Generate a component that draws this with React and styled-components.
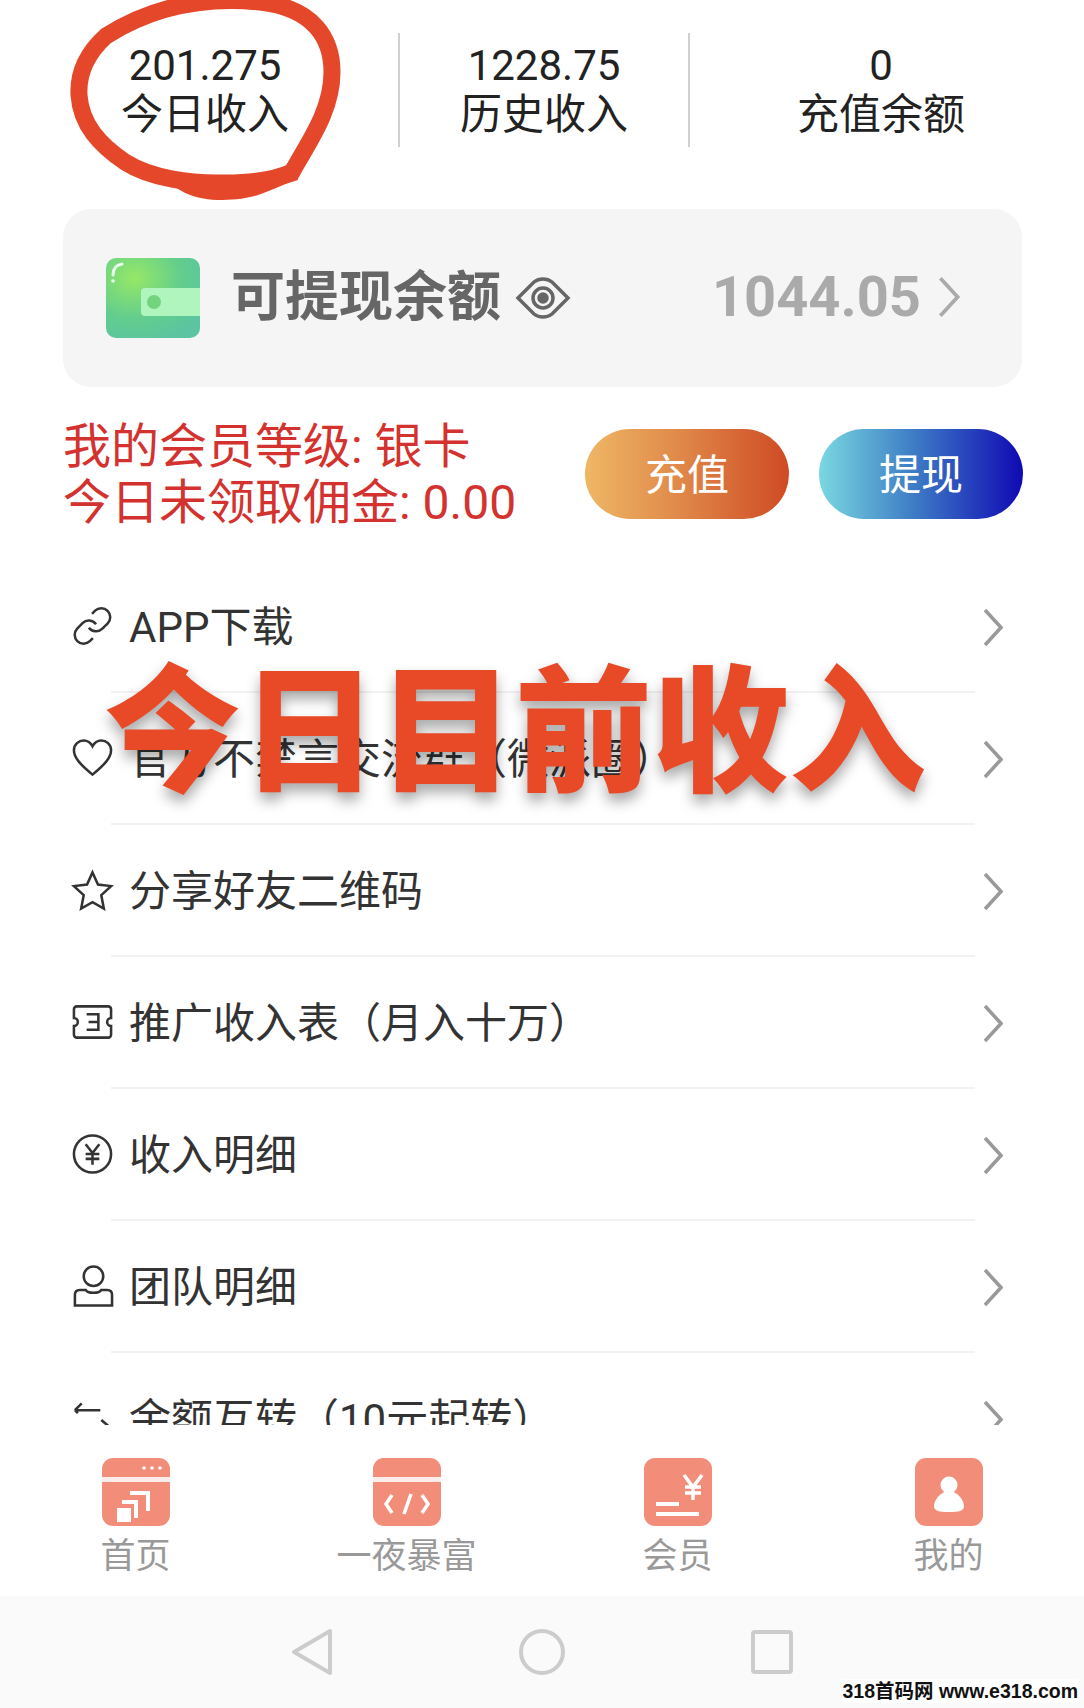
import React from "react";
import styled, { createGlobalStyle } from "styled-components";

const GlobalStyle = createGlobalStyle`
  html, body { margin: 0; padding: 0; background: #fff; }
  body { font-family: Roboto, "Noto Sans CJK SC", sans-serif; }
`;

const Page = styled.div`
  position: relative;
  width: 1084px;
  height: 1708px;
  overflow: hidden;
  background: #fff;
  display: flex;
  flex-direction: column;
`;

const Stats = styled.div`
  display: grid;
  grid-template-columns: 386px 290px 384px;
  padding: 33px 12px 0;
  height: 176px;
`;

const Stat = styled.div`
  height: 114px;
  padding-top: 8px;
  box-sizing: border-box;
  text-align: center;
  color: #222;
  font-size: 42px;
  line-height: 49px;
  border-left: ${(p) => (p.$first ? "none" : "2px solid #d0d0d0")};
`;

const BalanceCard = styled.div`
  margin: 0 62px 0 63px;
  height: 178px;
  border-radius: 28px;
  background: #f5f5f5;
  display: flex;
  align-items: center;
  padding: 0 61px 0 43px;
  box-sizing: border-box;
`;

const BalanceTitle = styled.div`
  margin-left: 31px;
  font-size: 54px;
  font-weight: 700;
  color: #666;
  line-height: 60px;
`;

const BalanceAmount = styled.div`
  margin-left: auto;
  font-size: 56px;
  font-weight: 700;
  color: #aaa;
  margin-top: -2px;
`;

const BalanceChevron = styled.span`
  display: flex;
  margin-left: 16px;
  margin-top: -3px;
`;

const EyeSvg = styled.svg`
  margin-left: 14px;
  fill: none;
  stroke: #666;
  stroke-width: 3.5;
`;

const MemberRow = styled.div`
  display: flex;
  align-items: center;
  justify-content: space-between;
  margin-top: 31px;
  padding: 0 61px 0 63px;
  height: 112px;
`;

const MemberText = styled.div`
  color: #d4322e;
  font-size: 48px;
  line-height: 56px;
  padding-top: 2px;
`;

const Buttons = styled.div`
  display: flex;
  gap: 30px;
`;

const PillButton = styled.div`
  width: 204px;
  height: 90px;
  border-radius: 45px;
  display: flex;
  align-items: center;
  justify-content: center;
  color: #fff;
  font-size: 42px;
  padding-bottom: 6px;
  box-sizing: border-box;
  background: ${(p) =>
    p.$blue
      ? "linear-gradient(90deg, #7ad8e0 0%, #3f7fc6 45%, #1009b4 100%)"
      : "linear-gradient(90deg, #efb765 0%, #e08a4a 45%, #cf4a24 100%)"};
`;

const MenuList = styled.div`
  margin-top: 31px;
  height: 864px;
  overflow: hidden;
`;

const MenuRow = styled.div`
  display: flex;
  align-items: center;
  height: 130px;
  padding: 0 81px 0 71px;
  color: #333;
  font-size: 42px;
`;

const RowLabel = styled.span`
  margin-left: 15px;
  margin-top: -6px;
  flex: 1;
`;

const RowChevron = styled.span`
  display: flex;
  margin-top: 2px;
`;

const RowDivider = styled.div`
  height: 2px;
  margin: 0 109px 0 111px;
  background: #f2f2f2;
`;

const TabBar = styled.div`
  display: grid;
  grid-template-columns: repeat(4, 1fr);
  height: 171px;
  padding-top: 33px;
  box-sizing: border-box;
`;

const Tab = styled.div`
  display: flex;
  flex-direction: column;
  align-items: center;
  color: #999;
  font-size: 35px;
  line-height: 40px;
  gap: 11px;
`;

const NavBar = styled.div`
  height: 112px;
  background: #fafafa;
  display: flex;
  justify-content: center;
  align-items: center;
  gap: 184px;
`;

const Circled = styled.svg`
  position: absolute;
  left: 0;
  top: 0;
`;

const BigCaption = styled.div`
  position: absolute;
  left: 104px;
  top: 626px;
  font-size: 137px;
  line-height: 190px;
  font-weight: 900;
  white-space: nowrap;
  color: #e84a27;
  font-family: "Noto Sans CJK SC", sans-serif;
  text-shadow: 0 8px 14px rgba(0, 0, 0, 0.35);
`;

const Watermark = styled.div`
  position: absolute;
  right: 6px;
  bottom: 5px;
  font-family: "Liberation Sans", "Noto Sans CJK SC", sans-serif;
  font-size: 19.5px;
  font-weight: 700;
  line-height: 24px;
  white-space: nowrap;
  background: rgba(255, 255, 255, 0.9);
  color: #111;
`;

const Chevron = ({ w = 20, h = 39, color = "#999", sw = 3.5 }) => (
  <svg width={w} height={h} viewBox="0 0 20 39">
    <path d="M2 2l16 17.5L2 37" fill="none" stroke={color} strokeWidth={sw} />
  </svg>
);

const Wallet = () => (
  <svg width="94" height="80" viewBox="0 0 94 80">
    <defs>
      <radialGradient id="wg" cx="0.3" cy="0.25" r="0.85">
        <stop offset="0" stopColor="#96e866" />
        <stop offset="0.6" stopColor="#62cd8d" />
        <stop offset="1" stopColor="#5cc4a2" />
      </radialGradient>
    </defs>
    <rect x="0" y="0" width="94" height="80" rx="10" fill="url(#wg)" />
    <path d="M39 30h55v28H39a4 4 0 0 1-4-4V34a4 4 0 0 1 4-4z" fill="#b0f5bd" />
    <circle cx="48" cy="44" r="7" fill="#72d47e" />
    <path d="M7 17c0-6 3-10 9-11" fill="none" stroke="#eafff0" strokeWidth="3" strokeLinecap="round" />
    <circle cx="7" cy="23" r="1.8" fill="#eafff0" />
  </svg>
);

const Eye = () => (
  <EyeSvg width="56" height="44" viewBox="0 0 56 44">
    <path d="M3 22L19 6c5-4 13-4 18 0l16 16-16 16c-5 4-13 4-18 0z" />
    <circle cx="28" cy="22" r="10" />
    <circle cx="28" cy="22" r="4" fill="#666" />
  </EyeSvg>
);

const rowIcons = {
  link: (
    <g transform="scale(1.83)" strokeWidth="1.4">
      <path d="M10 13a5 5 0 0 0 7.54.54l3-3a5 5 0 0 0-7.07-7.07l-1.72 1.71" />
      <path d="M14 11a5 5 0 0 0-7.54-.54l-3 3a5 5 0 0 0 7.07 7.07l1.71-1.71" />
    </g>
  ),
  heart: <path d="M22 39C10 29 3 22 3 14 3 8 8 4 13 4c4 0 7 2 9 6 2-4 5-6 9-6 5 0 10 4 10 10 0 8-7 15-19 25z" />,
  star: <path d="M22 4l5.6 12.4L41 18l-10 9.300 2.600 13.700L22 34.500 10.400 41 13 27.300 3 18l13.400-1.600z" />,
  ticket: (
    <>
      <path d="M6 6h32a3 3 0 0 1 3 3v9a4 4 0 0 0 0 8v9a3 3 0 0 1-3 3H6a3 3 0 0 1-3-3v-9a4 4 0 0 0 0-8V9a3 3 0 0 1 3-3z" />
      <path d="M16 14h12v16H16M18 22h10" />
    </>
  ),
  yen: (
    <>
      <circle cx="22" cy="22" r="19" />
      <path d="M15 12l7 9 7-9M22 21v12M15 22h14M15 27h14" />
    </>
  ),
  user: (
    <>
      <circle cx="23" cy="12" r="10" />
      <path d="M4 42V31c0-3 2-5 5-5h6c2 4 14 4 16 0h6c3 0 5 2 5 5v11z" />
    </>
  ),
  transfer: (
    <>
      <path d="M4 14h26M4 14l7-7M4 14l3 3" />
      <path d="M31 24l7 6" />
    </>
  ),
};

const RowIconSvg = styled.svg`
  flex: none;
  fill: none;
  stroke: #333;
  stroke-width: 2.6;
`;

const RowIcon = ({ name }) => (
  <RowIconSvg width="43" height="44" viewBox="0 0 44 44">
    {rowIcons[name]}
  </RowIconSvg>
);

const TabIcon = ({ name }) => (
  <svg width="68" height="68" viewBox="0 0 68 68">
    <rect width="68" height="68" rx="11" fill="#f28d7a" />
    {(name === "home" || name === "code") && <rect y="19" width="68" height="5" fill="#fff" fillOpacity=".85" />}
    {name === "home" && (
      <g fill="#fff">
        <circle cx="42" cy="10" r="1.800" />
        <circle cx="50" cy="10" r="1.800" />
        <circle cx="58" cy="10" r="1.800" />
        <rect x="15" y="50" width="14" height="14" />
        <path d="M20 42h16v18h-4V46H20z" />
        <path d="M28 33h20v20h-4V37H28z" />
      </g>
    )}
    {name === "code" && (
      <path d="M19 37l-6 9 6 9M49 37l6 9-6 9M38 36l-7 20" fill="none" stroke="#fff" strokeWidth="3.500" />
    )}
    {name === "vip" && (
      <g fill="none" stroke="#fff" strokeWidth="3.500">
        <path d="M40 17l9 12 9-12M49 29v13M41 29h16M41 35h16" />
        <path d="M12 46h23M12 56h43" strokeWidth="4" />
      </g>
    )}
    {name === "me" && (
      <g fill="#fff">
        <circle cx="34" cy="27" r="8.500" />
        <path d="M34 33c-9 0-15 10-15 15 0 5 5 6 15 6s15-1 15-6c0-5-6-15-15-15z" />
      </g>
    )}
  </svg>
);

const menu = [
  { icon: "link", label: "APP下载" },
  { icon: "heart", label: "官方不禁言交流群（微派圈）" },
  { icon: "star", label: "分享好友二维码" },
  { icon: "ticket", label: "推广收入表（月入十万）" },
  { icon: "yen", label: "收入明细" },
  { icon: "user", label: "团队明细" },
  { icon: "transfer", label: "余额互转（10元起转）" },
];

const tabs = [
  { icon: "home", label: "首页" },
  { icon: "code", label: "一夜暴富" },
  { icon: "vip", label: "会员" },
  { icon: "me", label: "我的" },
];

export default function App() {
  return (
    <Page>
      <GlobalStyle />
      <Stats>
        <Stat $first>201.275<br />今日收入</Stat>
        <Stat>1228.75<br />历史收入</Stat>
        <Stat>0<br />充值余额</Stat>
      </Stats>

      <BalanceCard>
        <Wallet />
        <BalanceTitle>可提现余额</BalanceTitle>
        <Eye />
        <BalanceAmount>1044.05</BalanceAmount>
        <BalanceChevron>
          <Chevron w={24} h={42} color="#aaa" />
        </BalanceChevron>
      </BalanceCard>

      <MemberRow>
        <MemberText>
          我的会员等级: 银卡<br />今日未领取佣金: 0.00
        </MemberText>
        <Buttons>
          <PillButton>充值</PillButton>
          <PillButton $blue>提现</PillButton>
        </Buttons>
      </MemberRow>

      <MenuList>
        {menu.map((item, i) => (
          <React.Fragment key={item.label}>
            <MenuRow>
              <RowIcon name={item.icon} />
              <RowLabel>{item.label}</RowLabel>
              <RowChevron>
                <Chevron />
              </RowChevron>
            </MenuRow>
            {i < menu.length - 1 && <RowDivider />}
          </React.Fragment>
        ))}
      </MenuList>

      <TabBar>
        {tabs.map((t) => (
          <Tab key={t.label}>
            <TabIcon name={t.icon} />
            {t.label}
          </Tab>
        ))}
      </TabBar>

      <NavBar>
        <svg width="46" height="48" viewBox="0 0 46 48">
          <path d="M41 3v42L5 24z" fill="none" stroke="#ccc" strokeWidth="4" strokeLinejoin="round" />
        </svg>
        <svg width="46" height="46" viewBox="0 0 46 46">
          <circle cx="23" cy="23" r="21" fill="none" stroke="#ccc" strokeWidth="4" />
        </svg>
        <svg width="46" height="44" viewBox="0 0 46 44">
          <rect x="4" y="2" width="38" height="40" rx="2" fill="none" stroke="#ccc" strokeWidth="4" />
        </svg>
      </NavBar>

      <Circled width="360" height="210" viewBox="0 0 360 210">
        <path
          d="M260 2C200 -4 150 8 106 36C85 55 78 75 79 95C81 125 100 145 125 162C150 178 190 184 225 183C250 183 275 180 292 172C310 140 332 110 332 72C332 40 315 8 260 2z"
          fill="none"
          stroke="#e5472a"
          strokeWidth="17"
        />
        <path d="M165 178C200 182 260 182 296 170L298 180C270 188 260 200 222 200C195 200 178 192 165 178z" fill="#e5472a" />
      </Circled>

      <BigCaption>今日目前收入</BigCaption>
      <Watermark>318首码网 www.e318.com</Watermark>
    </Page>
  );
}
